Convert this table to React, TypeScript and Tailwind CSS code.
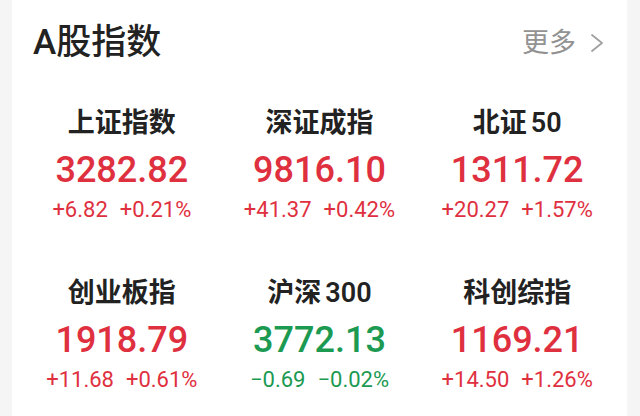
type Index = {
  name: string;
  code?: string;
  price: string;
  change: string;
  pct: string;
  up: boolean;
};

const indexes: Index[] = [
  { name: "上证指数", price: "3282.82", change: "+6.82", pct: "+0.21%", up: true },
  { name: "深证成指", price: "9816.10", change: "+41.37", pct: "+0.42%", up: true },
  { name: "北证", code: "50", price: "1311.72", change: "+20.27", pct: "+1.57%", up: true },
  { name: "创业板指", price: "1918.79", change: "+11.68", pct: "+0.61%", up: true },
  { name: "沪深", code: "300", price: "3772.13", change: "−0.69", pct: "−0.02%", up: false },
  { name: "科创综指", price: "1169.21", change: "+14.50", pct: "+1.26%", up: true },
];

const IndexCell = ({ item }: { item: Index }) => {
  const color = item.up ? "text-[#df3040]" : "text-[#1c9a52]";
  return (
    <div className="flex flex-col items-center">
      <div className="text-[27px] leading-[36px] font-semibold text-[#222]">
        {item.name}
        {item.code && <span className="ml-[4px]">{item.code}</span>}
      </div>
      <div className={`mt-[7px] text-[36px] leading-[44px] font-medium ${color}`}>{item.price}</div>
      <div className={`mt-[3px] flex gap-[12px] text-[22px] leading-[30px] ${color}`}>
        <span>{item.change}</span>
        <span>{item.pct}</span>
      </div>
    </div>
  );
};

export default function App() {
  return (
    <div className="flex h-[416px] w-[640px] overflow-hidden bg-[#f5f5f6] font-['Roboto','Noto_Sans_CJK_SC',sans-serif]">
      <div className="w-[12px] shrink-0" />
      {/* card */}
      <div className="flex-1 bg-white">
        {/* header */}
        <div className="flex items-center justify-between pl-[21px] pr-[23px] pt-[21px]">
          <h1 className="text-[35px] leading-[44px] font-medium text-[#222]">A股指数</h1>
          <div className="flex items-center gap-[14px] text-[27px] leading-[30px] text-[#929292]">
            <span>更多</span>
            <svg width="14" height="20" viewBox="0 0 14 20" fill="none">
              <polyline points="2,2 12,10 2,18" stroke="#a0a0a0" strokeWidth="1.8" strokeLinecap="round" strokeLinejoin="round" />
            </svg>
          </div>
        </div>

        {/* grid */}
        <div className="mt-[40px] grid grid-cols-3 gap-y-[50px] px-[11px]">
          {indexes.map((it) => (
            <IndexCell key={it.name} item={it} />
          ))}
        </div>
      </div>
      <div className="w-[13px] shrink-0" />
    </div>
  );
}
